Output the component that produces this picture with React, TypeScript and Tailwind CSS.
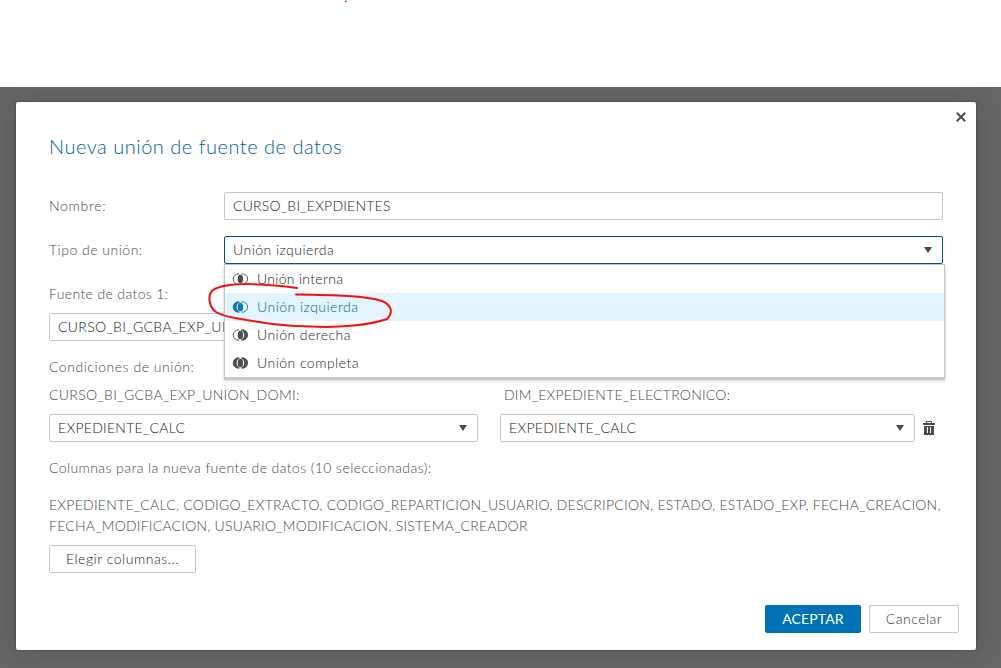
import type { ReactNode } from "react";

type JoinKind = "inner" | "left" | "right" | "full";

function JoinIcon({ kind }: { kind: JoinKind }) {
  const left = kind === "left" || kind === "full";
  const right = kind === "right" || kind === "full";
  return (
    <svg
      viewBox="-0.4 0 16 12"
      className={`h-3 w-4 shrink-0 ${kind === "left" ? "text-[#0f77b5]" : "text-[#4d4d4d]"}`}
    >
      {left && <path d="M7.4 1A5.2 5.2 0 1 0 7.4 11Q4.2 9.2 4.2 6Q4.2 2.8 7.4 1Z" fill="currentColor" />}
      {right && <path d="M8.6 1A5.2 5.2 0 1 1 8.6 11Q11.8 9.2 11.8 6Q11.8 2.8 8.6 1Z" fill="currentColor" />}
      <path d="M7 .9A5.2 5.2 0 1 0 7 11.1M9 .9A5.2 5.2 0 1 1 9 11.1" fill="none" stroke="currentColor" strokeWidth="0.9" />
      <ellipse cx="8" cy="6" rx="2.7" ry="4.3" fill="currentColor" />
    </svg>
  );
}

function Arrow() {
  return (
    <svg viewBox="0 0 8 6" className="h-1.5 w-2 shrink-0">
      <path d="M0 0H8L4 6Z" fill="#4a4a4a" />
    </svg>
  );
}

function Field({ children, className, arrow }: { children: ReactNode; className: string; arrow?: boolean }) {
  return (
    <div className={`flex h-7 items-center justify-between rounded-[2px] border bg-white pr-[10px] pl-2 text-[#222] ${className}`}>
      {children}
      {arrow && <Arrow />}
    </div>
  );
}

const options: { kind: JoinKind; label: string; text: string }[] = [
  { kind: "inner", label: "Unión interna", text: "tracking-[0.3px]" },
  { kind: "left", label: "Unión izquierda", text: "tracking-[0.48px]" },
  { kind: "right", label: "Unión derecha", text: "tracking-[0.45px]" },
  { kind: "full", label: "Unión completa", text: "tracking-[0.47px]" },
];

export default function App() {
  return (
    <div className="relative flex h-[668px] w-[1001px] flex-col overflow-hidden bg-white font-['Lato',sans-serif] text-[14px] leading-7 font-light text-[#484848]">
      <div className="h-[87px] shrink-0" />
      <div className="flex-1 bg-[#666] pt-[15px] pl-4">
        <div className="relative h-[548px] w-[960px] rounded-[2px] bg-white pt-[32px] pl-[33px] shadow-[0_2px_28px_rgba(0,0,0,0.14),0_0_2px_rgba(0,0,0,0.5)]">
          <button className="absolute top-[10px] right-[10px] flex h-[10px] w-[10px]">
            <svg viewBox="0 0 10 10" className="h-[10px] w-[10px]">
              <path d="M.8 .8L9.2 9.2M9.2 .8L.8 9.2" stroke="#4d4d4d" strokeWidth="2" />
            </svg>
          </button>
          <h1 className="text-[20px] leading-6 tracking-[0.51px] text-[#0060a0]">
            <span>Nueva unión de fuente de datos</span>
          </h1>

          <div className="mt-[34px] flex">
            <div className="w-[175px]"><span className="tracking-[0.7px]">Nombre:</span></div>
            <Field className="w-[719px] border-[#c6c6c6]"><span className="tracking-[0.22px]">CURSO_BI_EXPDIENTES</span></Field>
          </div>
          <div className="relative mt-4 flex">
            <div className="w-[175px]"><span className="tracking-[0.5px]">Tipo de unión:</span></div>
            <Field arrow className="w-[719px] border-[#04518c]"><span className="tracking-[0.47px]">Unión izquierda</span></Field>
            <ul className="absolute top-7 left-[175px] z-10 h-[114px] w-[721px] border border-[#c6c6c6] bg-white shadow-[0_2px_1px_#c9c9c9,0_3px_3px_rgba(0,0,0,0.15)]">
              {options.map((o) => (
                <li
                  key={o.kind}
                  className={`flex h-7 items-center gap-[9px] pl-[7px] ${o.kind === "left" ? "bg-[#e3f4fe] text-[#0060a0]" : "text-[#222]"}`}
                >
                  <JoinIcon kind={o.kind} />
                  <span className={o.text}>{o.label}</span>
                </li>
              ))}
            </ul>
          </div>

          <div className="mt-4"><span className="tracking-[0.37px]">Fuente de datos 1:</span></div>
          <Field className="mt-[5px] w-[429px] border-[#c6c6c6]"><span className="tracking-[0.34px]">CURSO_BI_GCBA_EXP_UNI</span></Field>

          <div className="mt-3"><span className="tracking-[0.54px]">Condiciones de unión:</span></div>
          <div className="flex">
            <div className="w-[455px]"><span className="tracking-[0.34px]">CURSO_BI_GCBA_EXP_UNION_DOMI:</span></div>
            <div><span className="tracking-[0.23px]">DIM_EXPEDIENTE_ELECTRONICO:</span></div>
          </div>
          <div className="mt-[5px] flex items-center">
            <Field arrow className="w-[429px] border-[#c6c6c6]"><span className="tracking-[0.27px]">EXPEDIENTE_CALC</span></Field>
            <Field arrow className="ml-[22px] w-[415px] border-[#c6c6c6]"><span className="tracking-[0.27px]">EXPEDIENTE_CALC</span></Field>
            <svg viewBox="0 0 12 14" className="ml-2 h-[14px] w-3">
              <path d="M3.5 2.2V.5H8.5V2.2" fill="none" stroke="#4a4a4a" />
              <path d="M0 2H12V4H0ZM1 5H11V14H1Z" fill="#4a4a4a" />
              <path d="M4.5 6.2V12M7.5 6.2V12" stroke="white" />
            </svg>
          </div>

          <div className="mt-3"><span className="tracking-[0.41px]">Columnas para la nueva fuente de datos (10 seleccionadas):</span></div>
          <p className="mt-[12px] leading-[21px] whitespace-nowrap">
            <span className="tracking-[0.25px]">EXPEDIENTE_CALC, CODIGO_EXTRACTO, CODIGO_REPARTICION_USUARIO, DESCRIPCION, ESTADO, ESTADO_EXP, FECHA_CREACION,</span>
            <br />
            <span className="tracking-[0.23px]">FECHA_MODIFICACION, USUARIO_MODIFICACION, SISTEMA_CREADOR</span>
          </p>
          <button className="mt-[9px] flex h-7 w-[147px] items-center justify-center rounded-[2px] border border-[#c6c6c6] text-[#222]">
            <span className="tracking-[0.52px]">Elegir columnas...</span>
          </button>
          <div className="mt-8 mr-[17px] flex justify-end gap-2">
            <button className="flex h-7 w-24 items-center justify-center rounded-[2px] bg-[#0072b5] font-normal text-white"><span className="tracking-[0.14px]">ACEPTAR</span></button>
            <button className="flex h-7 w-[90px] items-center justify-center rounded-[2px] border border-[#c6c6c6] text-[#333]"><span className="tracking-[0.5px]">Cancelar</span></button>
          </div>
        </div>
      </div>
      <svg viewBox="0 0 1001 668" className="pointer-events-none absolute inset-0 z-20 h-full w-full" fill="none" stroke="#f50f0f" strokeWidth="2" strokeLinecap="round">
        <path d="M297 288C270 284 228 281 213 290C207 295 209 307 216 312C223 316 229 317 235 318C263 323 282 326 310 326.5C340 328 370 325 387 319C394 312 391 305 382 301C366 296 336 295 296 294.5" />
        <path d="M345.5 1.5H346" strokeWidth="1.5" />
      </svg>
    </div>
  );
}
